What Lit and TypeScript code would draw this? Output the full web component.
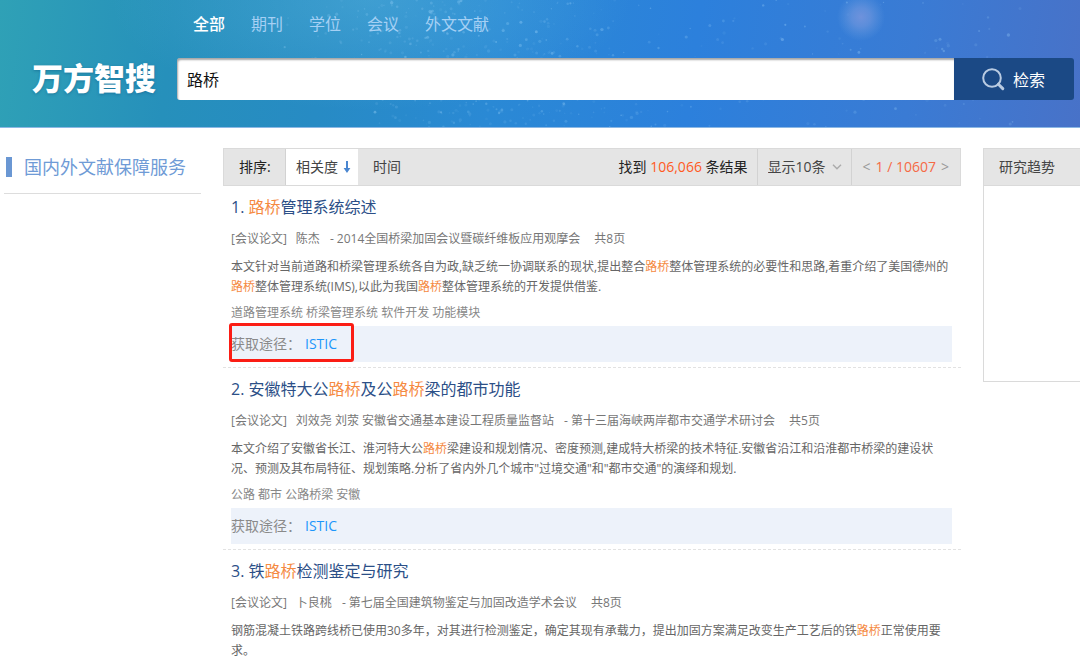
import { LitElement, html, svg, css, nothing } from "lit";
import { customElement, property, state } from "lit/decorators.js";
import { classMap } from "lit/directives/class-map.js";

const KEYWORD = "路桥";

interface Paper {
  title: string;
  authors: string;
  source: string;
  pages: string;
  abstract: string;
  keywords: string;
  marked?: boolean;
}

const PAPERS: Paper[] = [
  {
    title: "路桥管理系统综述",
    authors: "陈杰",
    source: "2014全国桥梁加固会议暨碳纤维板应用观摩会",
    pages: "共8页",
    abstract:
      "本文针对当前道路和桥梁管理系统各自为政,缺乏统一协调联系的现状,提出整合路桥整体管理系统的必要性和思路,着重介绍了美国德州的路桥整体管理系统(IMS),以此为我国路桥整体管理系统的开发提供借鉴.",
    keywords: "道路管理系统 桥梁管理系统 软件开发 功能模块",
    marked: true,
  },
  {
    title: "安徽特大公路桥及公路桥梁的都市功能",
    authors: "刘效尧 刘荥 安徽省交通基本建设工程质量监督站",
    source: "第十三届海峡两岸都市交通学术研讨会",
    pages: "共5页",
    abstract:
      "本文介绍了安徽省长江、淮河特大公路桥梁建设和规划情况、密度预测,建成特大桥梁的技术特征.安徽省沿江和沿淮都市桥梁的建设状况、预测及其布局特征、规划策略.分析了省内外几个城市\"过境交通\"和\"都市交通\"的演绎和规划.",
    keywords: "公路 都市 公路桥梁 安徽",
  },
  {
    title: "铁路桥检测鉴定与研究",
    authors: "卜良桃",
    source: "第七届全国建筑物鉴定与加固改造学术会议",
    pages: "共8页",
    abstract:
      "钢筋混凝土铁路跨线桥已使用30多年，对其进行检测鉴定，确定其现有承载力，提出加固方案满足改变生产工艺后的铁路桥正常使用要求。",
    keywords: "",
  },
];

const highlight = (text: string) =>
  text
    .split(KEYWORD)
    .map((part, i) => (i === 0 ? part : html`<em class="hit">${KEYWORD}</em>${part}`));

const base = css`
  *,
  *::before,
  *::after {
    box-sizing: border-box;
  }
  button,
  input,
  select {
    font: inherit;
    color: inherit;
    margin: 0;
    padding: 0;
    border: 0;
    border-radius: 0;
    background: none;
  }
  button {
    cursor: pointer;
  }
  a {
    color: inherit;
    text-decoration: none;
  }
  h1,
  h2,
  h3,
  p {
    margin: 0;
    font-weight: 400;
  }
`;

/* Scattered stars, denser along a diagonal band, from a fixed seed. */
function makeStars() {
  let seed = 77;
  const rnd = () => (seed = (seed * 16807) % 2147483647) / 2147483647;
  const stars = [];
  for (let i = 0; i < 560; i++) {
    const y = rnd() * 127;
    const banded = i % 3 !== 0;
    const x = banded ? 250 + y * 0.7 + (rnd() + rnd()) * 190 : 380 + rnd() * 640;
    const r = 0.7 + rnd() * 1;
    const o = 0.06 + rnd() * rnd() * 0.32;
    stars.push(svg`<circle cx=${x.toFixed(1)} cy=${y.toFixed(1)} r=${r.toFixed(1)} fill="#a9dcff" opacity=${o.toFixed(2)} />`);
  }
  return stars;
}

@customElement("search-header")
class SearchHeader extends LitElement {
  @state() active = 0;

  static styles = [
    base,
    css`
      :host {
        display: block;
      }
      .header {
        position: relative;
        overflow: hidden;
        display: grid;
        grid-template-columns: 145px 1fr;
        padding: 0 6px 27px 32px;
        border-bottom: 1px solid #8cb8e4;
        background: radial-gradient(ellipse 260px 110px at 370px 0, rgba(100, 190, 225, 0.38), transparent),
          linear-gradient(97deg, #2fa1b6 0, #2690bb 16%, #278bc4 30%, #2a89d5 46%, #2c80dc 64%, #3a7bd4 84%, #4872c8 100%);
      }
      .sky {
        position: absolute;
        inset: 0;
        width: 100%;
        height: 100%;
      }
      .tabs {
        position: relative;
        grid-column: 2;
        display: flex;
        gap: 26px;
        padding: 12px 0 22px 16px;
        font-size: 16px;
        line-height: 24px;
        color: #a5d0f4;
      }
      .on {
        color: #fff;
        font-weight: 500;
      }
      .logo {
        position: relative;
        font-size: 31px;
        line-height: 40px;
        font-weight: 900;
        color: #fff;
        white-space: nowrap;
        text-shadow: 0 1px 3px rgba(0, 60, 110, 0.35);
      }
      .search {
        position: relative;
        display: flex;
        height: 42px;
        font-size: 16px;
      }
      .query {
        flex: 1;
        min-width: 0;
        padding: 0 10px;
        background: #fff;
        color: #111;
        border-radius: 3px 0 0 3px;
        box-shadow: inset 1px 2px 2px rgba(0, 0, 0, 0.35);
        outline: none;
      }
      .go {
        display: flex;
        align-items: center;
        justify-content: center;
        gap: 8px;
        width: 120px;
        padding-right: 2px;
        background: #1b4985;
        color: #fff;
        border-radius: 0 3px 3px 0;
      }
    `,
  ];

  render() {
    const tabs = ["全部", "期刊", "学位", "会议", "外文文献"];
    return html`
      <header class="header">
        <svg class="sky" viewBox="0 0 1080 127" preserveAspectRatio="xMidYMid slice" aria-hidden="true">
          <defs>
            <radialGradient id="glow">
              <stop offset="0" stop-color="#8199de" stop-opacity="0.75" />
              <stop offset="0.4" stop-color="#7b9cdf" stop-opacity="0.55" />
              <stop offset="1" stop-color="#6aa0e0" stop-opacity="0" />
            </radialGradient>
          </defs>
          ${makeStars()}
          <circle cx="861" cy="17" r="24" fill="url(#glow)" />
        </svg>
        <nav class="tabs">
          ${tabs.map(
            (t, i) => html`<button class=${classMap({ on: i === this.active })} @click=${() => (this.active = i)}>${t}</button>`
          )}
        </nav>
        <h1 class="logo">万方智搜</h1>
        <form class="search" @submit=${(e: Event) => e.preventDefault()}>
          <input class="query" type="text" aria-label="检索词" .value=${KEYWORD} />
          <button class="go" type="submit">
            <svg width="24" height="24" viewBox="0 0 24 24" fill="none" stroke="#b9cbe2" aria-hidden="true">
              <circle cx="11" cy="11" r="8.8" stroke-width="2" />
              <path d="M17.4 17.2L21.8 21.6" stroke-width="3" stroke-linecap="round" />
            </svg>
            检索
          </button>
        </form>
      </header>
    `;
  }
}

@customElement("result-toolbar")
class ResultToolbar extends LitElement {
  static styles = [
    base,
    css`
      :host {
        display: block;
      }
      .bar {
        display: flex;
        height: 38px;
        border: 1px solid #dadada;
        background: #e5e5e5;
        font-size: 14px;
        line-height: 36px;
        color: #444;
        white-space: nowrap;
      }
      .label {
        width: 62px;
        padding-left: 15px;
        border-right: 1px solid #d2d2d2;
        color: #222;
      }
      .sort {
        display: flex;
        align-items: center;
        gap: 5px;
        padding: 0 7px 0 10px;
      }
      .chosen {
        background: #fff;
      }
      .time {
        padding: 0 15px;
      }
      .found {
        margin-left: auto;
        padding-right: 9px;
        color: #222;
      }
      .count {
        color: #ff5a1f;
      }
      .size {
        display: grid;
        align-items: center;
        border-left: 1px solid #d2d2d2;
      }
      .size > * {
        grid-area: 1 / 1;
      }
      .pick {
        appearance: none;
        width: 93px;
        height: 36px;
        padding-left: 10px;
      }
      .chevron {
        justify-self: end;
        margin-right: 9px;
        pointer-events: none;
      }
      .pager {
        display: flex;
        gap: 5px;
        padding: 0 11px;
        border-left: 1px solid #d2d2d2;
        color: #f56a45;
      }
      .step {
        color: #999;
      }
    `,
  ];

  render() {
    return html`
      <div class="bar">
        <span class="label">排序:</span>
        <button class="sort chosen">
          相关度
          <svg width="8" height="14" viewBox="0 0 8 14" aria-hidden="true">
            <path d="M3 1h2v7h2.4L4 13 .6 8H3z" fill="#4a86d0" />
          </svg>
        </button>
        <button class="time">时间</button>
        <span class="found">找到 <span class="count">106,066</span> 条结果</span>
        <div class="size">
          <select class="pick" aria-label="每页显示条数">
            <option>显示10条</option>
            <option>显示20条</option>
            <option>显示50条</option>
          </select>
          <svg class="chevron" width="10" height="6" viewBox="0 0 10 6" fill="none" stroke="#aaa" stroke-width="1.4" aria-hidden="true">
            <path d="M1 .8L5 4.8L9 .8" />
          </svg>
        </div>
        <nav class="pager">
          <button class="step" aria-label="上一页">&lt;</button>
          <span>1 / 10607</span>
          <button class="step" aria-label="下一页">&gt;</button>
        </nav>
      </div>
    `;
  }
}

@customElement("paper-item")
class PaperItem extends LitElement {
  @property({ attribute: false }) paper!: Paper;
  @property({ type: Number }) index = 1;

  static styles = [
    base,
    css`
      :host {
        display: block;
        border-bottom: 1px dashed #e2e2e2;
      }
      :host(:last-of-type) {
        border-bottom: 0;
      }
      .item {
        padding: 9px 9px 5px 8px;
        font-size: 12px;
        line-height: 20px;
        color: #666;
      }
      .title {
        font-size: 16px;
        line-height: 24px;
        color: #2c4f87;
      }
      .hit {
        font-style: normal;
        color: #f58a42;
      }
      .meta {
        display: flex;
        margin-top: 10px;
        color: #777;
        white-space: nowrap;
      }
      .authors {
        margin: 0 10px 0 9px;
      }
      .pages {
        margin-left: 14px;
      }
      .abstract {
        margin-top: 8px;
      }
      .keywords {
        margin-top: 6px;
        color: #888;
      }
      .access {
        position: relative;
        display: flex;
        margin-top: 3px;
        background: #edf2fa;
        font-size: 14px;
        line-height: 36px;
        color: #8a8a8a;
      }
      .link {
        margin-left: 4px;
        color: #1c96fa;
      }
      .mark {
        position: absolute;
        top: -3px;
        left: -2px;
        width: 125px;
        height: 39px;
        border: 3px solid #fb1d14;
        border-radius: 3px;
        pointer-events: none;
      }
    `,
  ];

  render() {
    const p = this.paper;
    return html`
      <article class="item">
        <h3 class="title">${this.index}. <a href="#">${highlight(p.title)}</a></h3>
        <p class="meta">
          <span>[会议论文]</span><span class="authors">${p.authors}</span><span>- ${p.source}</span
          ><span class="pages">${p.pages}</span>
        </p>
        <p class="abstract">${highlight(p.abstract)}</p>
        ${p.keywords
          ? html`<p class="keywords">${p.keywords}</p>
              <div class="access">
                <span>获取途径：</span><a class="link" href="#">ISTIC</a>
                ${p.marked ? html`<span class="mark"></span>` : nothing}
              </div>`
          : nothing}
      </article>
    `;
  }
}

@customElement("app-root")
class AppRoot extends LitElement {
  static styles = [
    base,
    css`
      :host {
        display: block;
        background: #fff;
        font-family: "Open Sans", "Noto Sans CJK SC", sans-serif;
      }
      .page {
        display: grid;
        grid-template-columns: 197px minmax(0, 1fr) 97px;
        gap: 22px;
        align-items: start;
        padding: 20px 0 0 4px;
      }
      .side {
        padding: 6px 0 13px 2px;
        border-bottom: 1px solid #ddd;
      }
      .heading {
        display: flex;
        align-items: center;
        gap: 12px;
        font-size: 18px;
        line-height: 26px;
        color: #6f9bd6;
        white-space: nowrap;
      }
      .heading::before {
        content: "";
        width: 6px;
        height: 20px;
        background: #6a97d3;
      }
      .trend {
        height: 234px;
        border: 1px solid #dadada;
        border-right: 0;
      }
      .caption {
        padding-left: 15px;
        border-bottom: 1px solid #dadada;
        background: #e5e5e5;
        font-size: 14px;
        line-height: 36px;
        color: #444;
      }
    `,
  ];

  render() {
    return html`
      <search-header></search-header>
      <div class="page">
        <aside class="side"><h2 class="heading">国内外文献保障服务</h2></aside>
        <main>
          <result-toolbar></result-toolbar>
          ${PAPERS.map((p, i) => html`<paper-item .paper=${p} .index=${i + 1}></paper-item>`)}
        </main>
        <aside class="trend"><h2 class="caption">研究趋势</h2></aside>
      </div>
    `;
  }
}
